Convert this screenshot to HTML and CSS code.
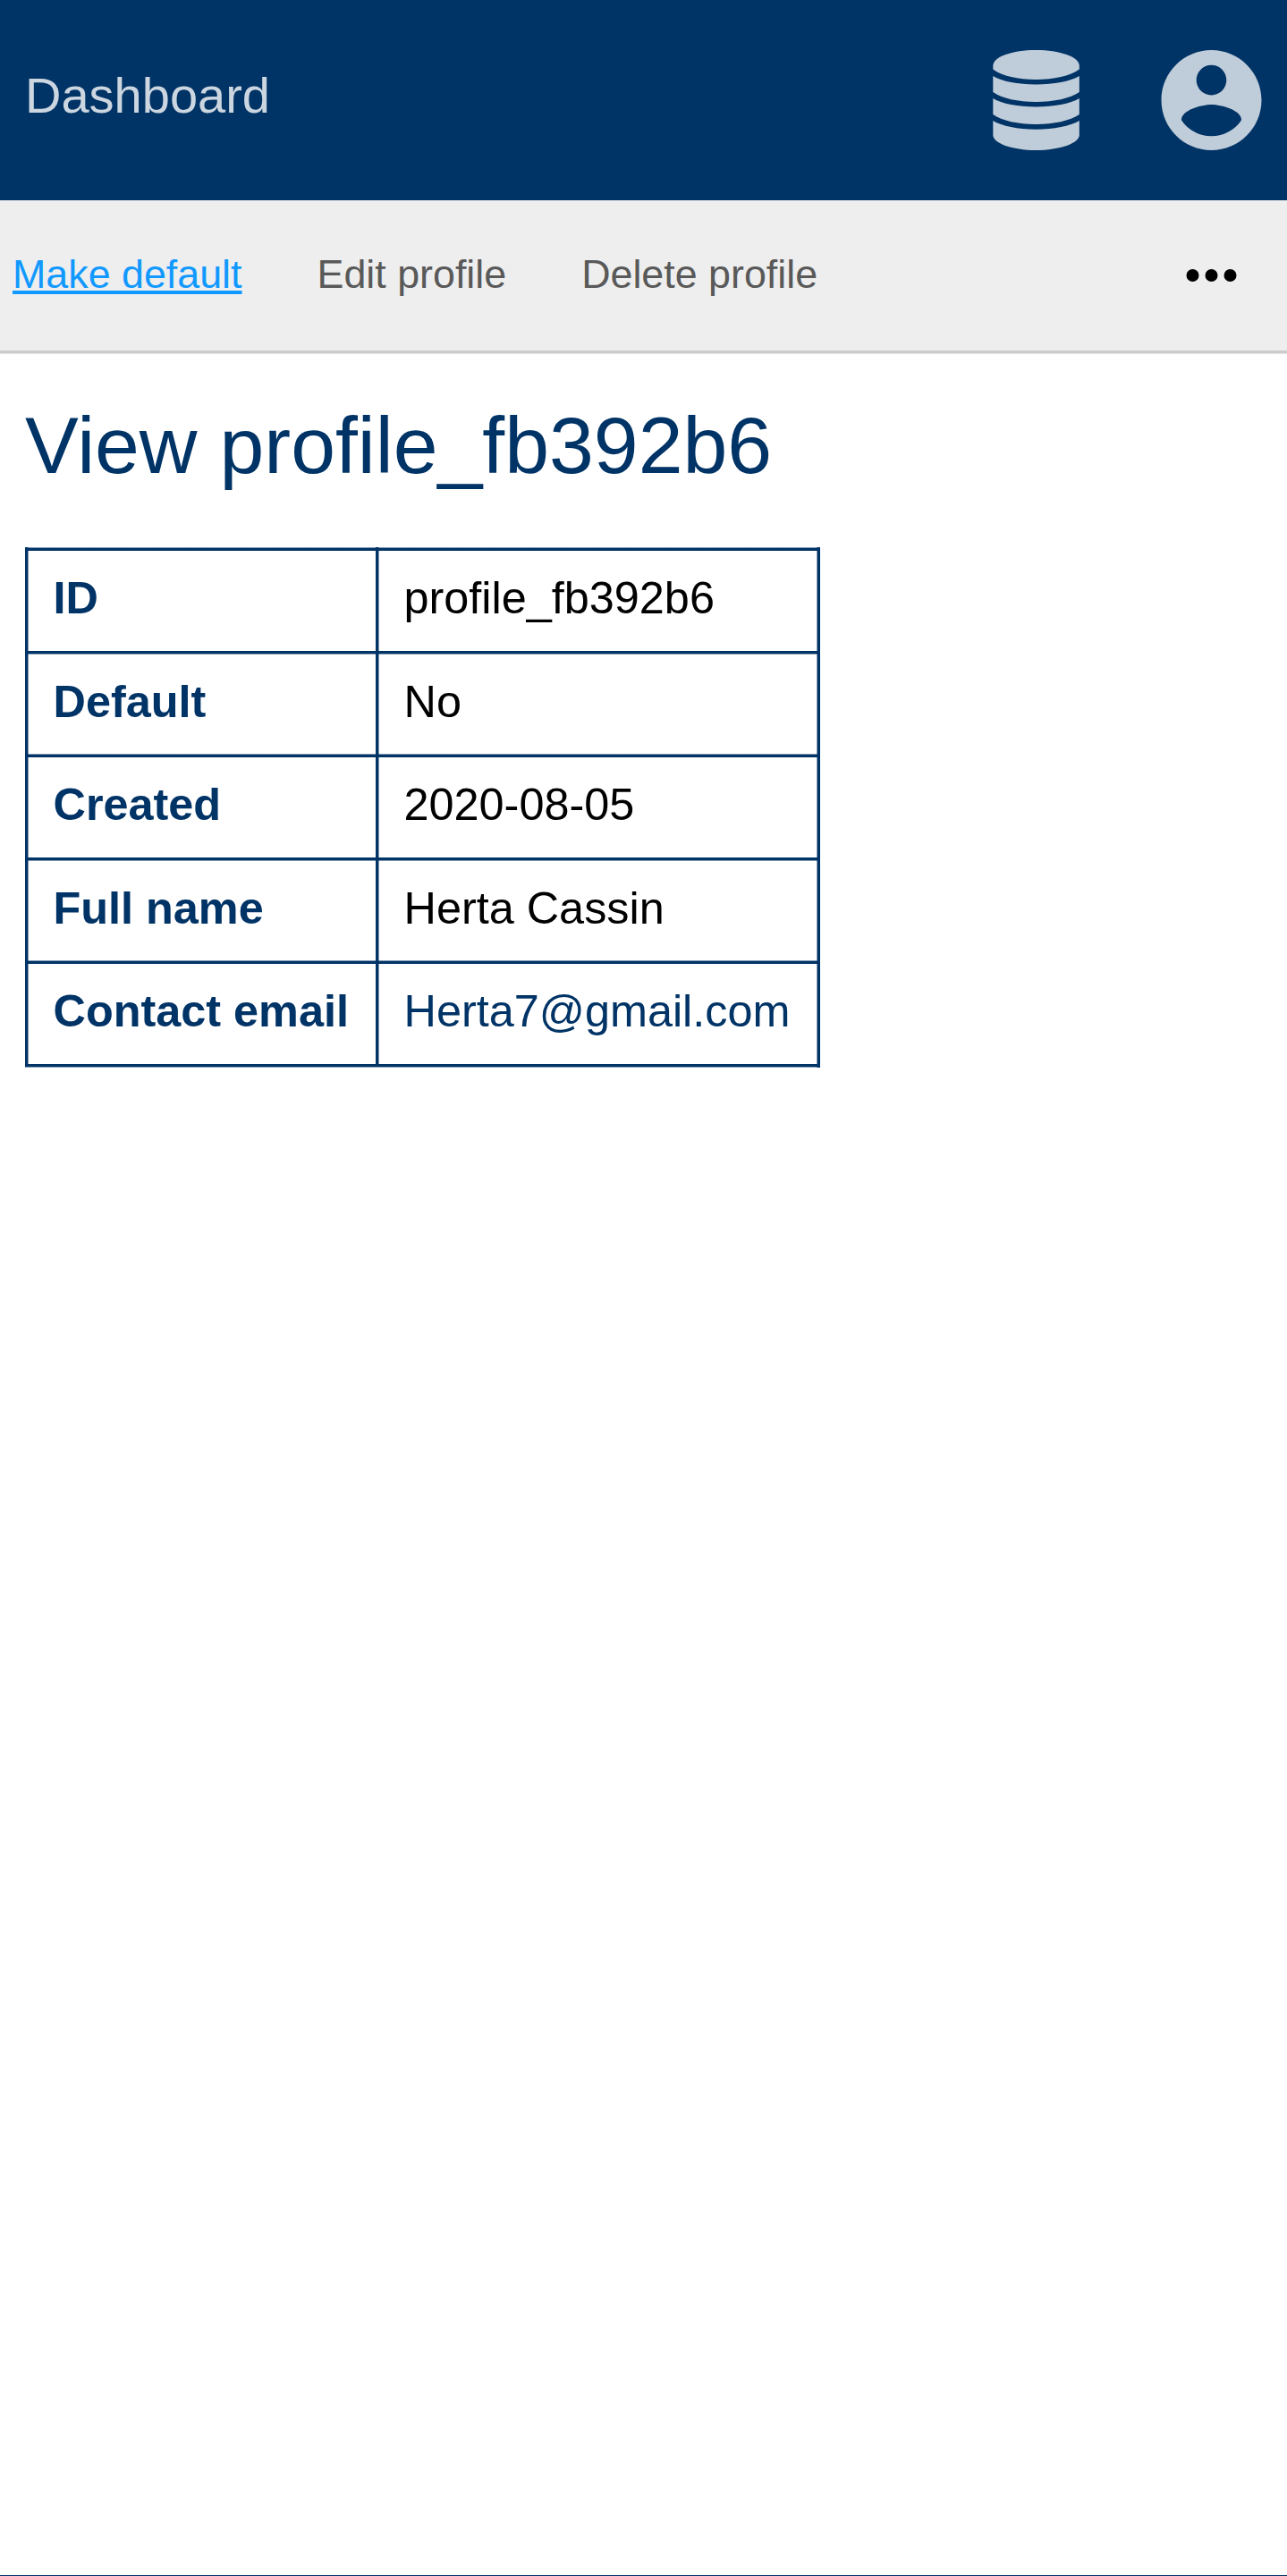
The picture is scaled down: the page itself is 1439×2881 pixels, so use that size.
FILE: index.html
```html
<!DOCTYPE html>
<html lang="en">
<head>
<meta charset="utf-8">
<title>View profile_fb392b6</title>
<link rel="stylesheet" href="styles.css">
</head>
<body>
<header class="header">
  <a class="brand">Dashboard</a>
  <div class="menus">
    <svg class="icon" viewBox="0.7 0 112 112"><path d="M8 17.500C8 7.500 29.500 0 56 0S104.500 7.500 104.500 17.500V21.500C94 29 76 33 56 33S18 29 8 21.500Z"/><path d="M8 29C18 35 36 38.500 56 38.500S94 35 104.500 29V47C94 54 76 58 56 58S18 54 8 47Z"/><path d="M8 54C18 60 36 63.500 56 63.500S94 60 104.500 54V72C94 79 76 83 56 83S18 79 8 72Z"/><path d="M8 79C18 85 36 88.700 56 88.700S94 85 104.500 79V95C104.500 104 83 112 56 112S8 104 8 95Z"/></svg>
    <svg class="icon" viewBox="2.09 2 20 20"><path d="M12 2C6.480 2 2 6.480 2 12s4.480 10 10 10 10-4.480 10-10S17.520 2 12 2zm0 3c1.660 0 3 1.340 3 3s-1.340 3-3 3-3-1.340-3-3 1.340-3 3-3zm0 14.200c-2.500 0-4.710-1.280-6-3.220.030-1.990 4-3.080 6-3.080 1.990 0 5.970 1.090 6 3.080-1.290 1.940-3.500 3.220-6 3.220z"/></svg>
  </div>
</header>
<nav class="nav">
  <a class="link active">Make default</a>
  <a class="link">Edit profile</a>
  <a class="link">Delete profile</a>
  <svg class="more" viewBox="0.5 0 56 14"><circle cx="7" cy="7" r="7"/><circle cx="28" cy="7" r="7"/><circle cx="49" cy="7" r="7"/></svg>
</nav>
<main class="content">
  <h1 class="title">View profile_fb392b6</h1>
  <div class="details">
    <div class="key">ID</div><div class="value">profile_fb392b6</div>
    <div class="key even">Default</div><div class="value even">No</div>
    <div class="key">Created</div><div class="value">2020-08-05</div>
    <div class="key even">Full name</div><div class="value even">Herta Cassin</div>
    <div class="key">Contact email</div><div class="value"><a class="mail">Herta7@gmail.com</a></div>
  </div>
</main>
<footer class="footer"></footer>
</body>
</html>
```
FILE: styles.css
```css
* { box-sizing: border-box; }
body {
  margin: 0;
  height: 2881px;
  display: flex;
  flex-direction: column;
  overflow: hidden;
  background: #fff;
  color: #000;
  font-family: "Liberation Sans", Arial, sans-serif;
}
.header {
  height: 224px;
  padding: 0 28px;
  display: flex;
  justify-content: space-between;
  align-items: center;
  background: #036;
}
.brand { font-size: 56px; line-height: 64px; padding-bottom: 10px; color: #ccd6e0; }
.menus { display: flex; gap: 84px; }
.icon { display: block; width: 112px; height: 112px; fill: #bfccd9; overflow: visible; }
.nav {
  height: 172px;
  padding: 0 56px 4px 14px;
  display: flex;
  align-items: center;
  gap: 84px;
  background: linear-gradient(#eee 168px, #ccc 168px 171px, #e5e5e5 171px);
}
.link { font-size: 44.8px; line-height: 52px; padding-bottom: 4px; color: #595959; }
.active { color: #19f; text-decoration: underline; }
.more { width: 56px; height: 14px; margin-left: auto; overflow: visible; }
.content { flex: 1; padding: 50px 28px 0; }
.title {
  margin: 0;
  height: 166px;
  font-size: 89.6px;
  line-height: 104px;
  font-weight: 400;
  color: #036;
}
/* 3.5px rules: three solid pixels plus one half-strength pixel */
.details {
  --half: rgba(0, 51, 102, .5);
  width: 889px;
  height: 582px;
  display: grid;
  grid-template-columns: 392px 497px;
  grid-template-rows: 116px 115px 116px 115px 116px;
  font-size: 50.4px;
  line-height: 58px;
  background:
    linear-gradient(#036 3px, var(--half) 3px) 0 578px / 100% 4px no-repeat,
    linear-gradient(to right, var(--half) 1px, #036 1px) 100% 0 / 4px 100% no-repeat;
}
.key, .value {
  --rule: linear-gradient(var(--half) 1px, #036 1px 4px, transparent 4px);
  padding: 28px 0 0 31.500px;
  background: var(--rule), linear-gradient(to right, #036 3px, var(--half) 3px 4px, transparent 4px);
}
.even { --rule: linear-gradient(#036 3px, var(--half) 3px 4px, transparent 4px); }
.key { font-weight: 700; color: #036; }
.mail { color: #036; }
.footer { height: 1px; background: #036; }
```
